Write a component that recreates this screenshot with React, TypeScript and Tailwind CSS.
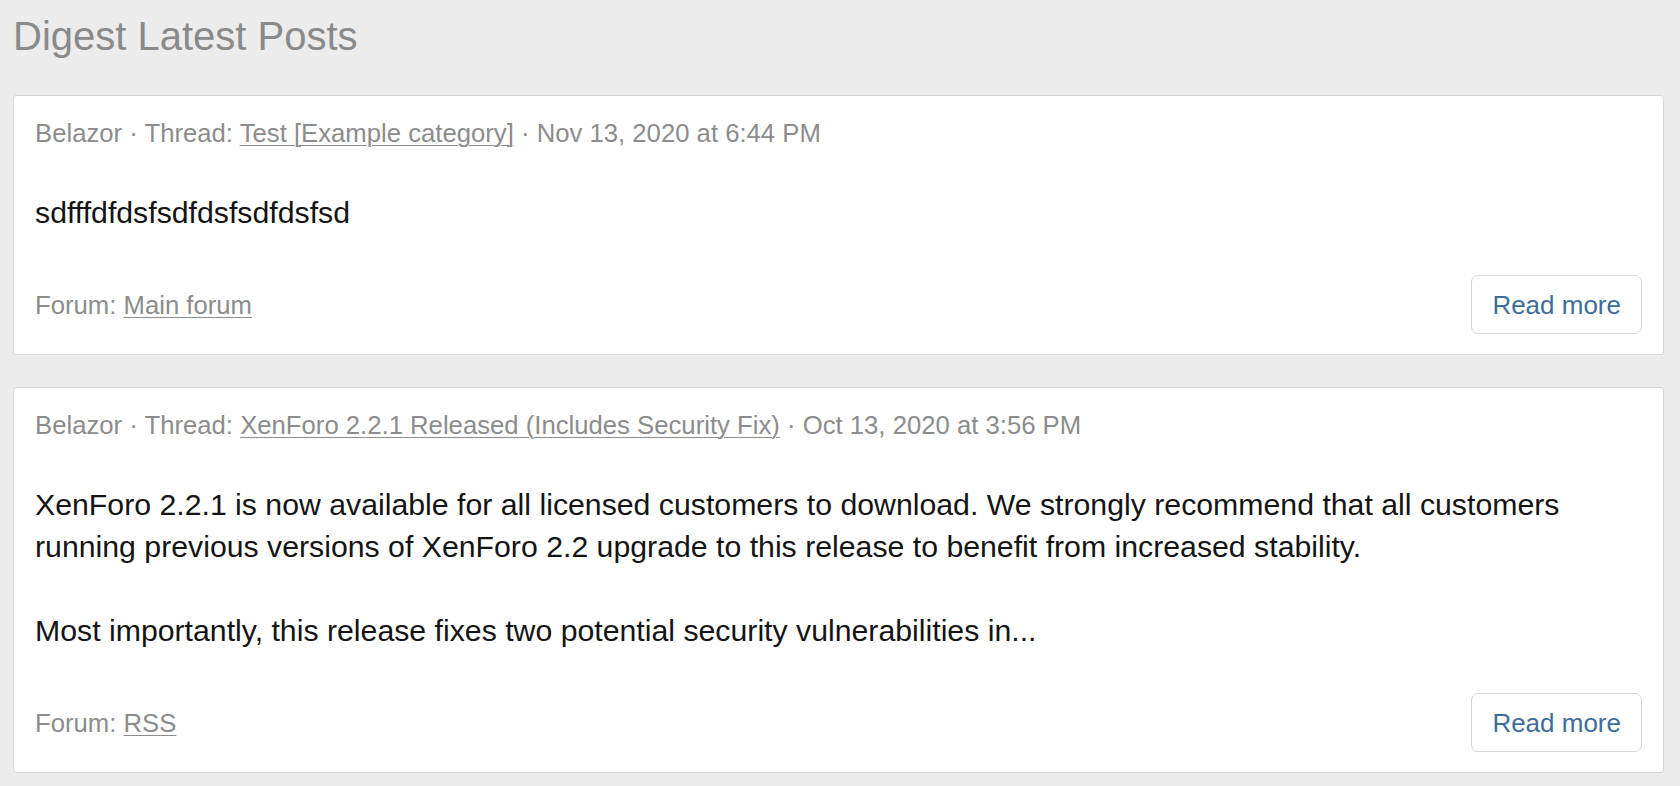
import React from 'react';

type Post = {
  author: string;
  thread: string;
  date: string;
  body: string[];
  forum: string;
};

const posts: Post[] = [
  {
    author: 'Belazor',
    thread: 'Test [Example category]',
    date: 'Nov 13, 2020 at 6:44 PM',
    body: ['sdfffdfdsfsdfdsfsdfdsfsd'],
    forum: 'Main forum',
  },
  {
    author: 'Belazor',
    thread: 'XenForo 2.2.1 Released (Includes Security Fix)',
    date: 'Oct 13, 2020 at 3:56 PM',
    body: [
      'XenForo 2.2.1 is now available for all licensed customers to download. We strongly recommend that all customers running previous versions of XenForo 2.2 upgrade to this release to benefit from increased stability.',
      'Most importantly, this release fixes two potential security vulnerabilities in...',
    ],
    forum: 'RSS',
  },
];

const PostCard: React.FC<{ post: Post }> = ({ post }) => {
  return (
    <div className="bg-white border border-[#d8d8d8] rounded-[3px] px-[21px] pt-[19px] pb-[20px]">
      {/* Meta line */}
      <div className="text-[25.7px] leading-[36px] text-[#8c8c8c]">
        {post.author} · Thread:{' '}
        <a href="#" className="underline decoration-1 underline-offset-[3px]">
          {post.thread}
        </a>{' '}
        · {post.date}
      </div>

      {/* Snippet */}
      <div className="mt-[41px] text-[30.25px] leading-[42px] text-[#141414]">
        {post.body.map((p, i) => (
          <React.Fragment key={i}>
            {i > 0 && (
              <>
                <br />
                <br />
              </>
            )}
            {p}
          </React.Fragment>
        ))}
      </div>

      {/* Footer */}
      <div className="mt-[41px] flex items-center justify-between h-[59px]">
        <span className="text-[25.7px] leading-[36px] text-[#8c8c8c]">
          Forum:{' '}
          <a href="#" className="underline decoration-1 underline-offset-[3px]">
            {post.forum}
          </a>
        </span>
        <button
          type="button"
          className="h-[59px] px-[20px] bg-white border border-[#d6d6d6] rounded-[7px] text-[26px] leading-[36px] text-[#3d6e9b]"
        >
          Read more
        </button>
      </div>
    </div>
  );
};

export default function App() {
  return (
    <div className="min-h-screen bg-[#ececec] font-['Liberation_Sans',Arial,sans-serif]">
      <h1 className="pt-[12px] pl-[13px] text-[40px] leading-[48px] text-[#8a8a8a] font-normal">
        Digest Latest Posts
      </h1>
      <div className="mt-[35px] ml-[13px] mr-[16px] flex flex-col gap-[32px]">
        {posts.map((post, i) => (
          <PostCard key={i} post={post} />
        ))}
      </div>
    </div>
  );
}
